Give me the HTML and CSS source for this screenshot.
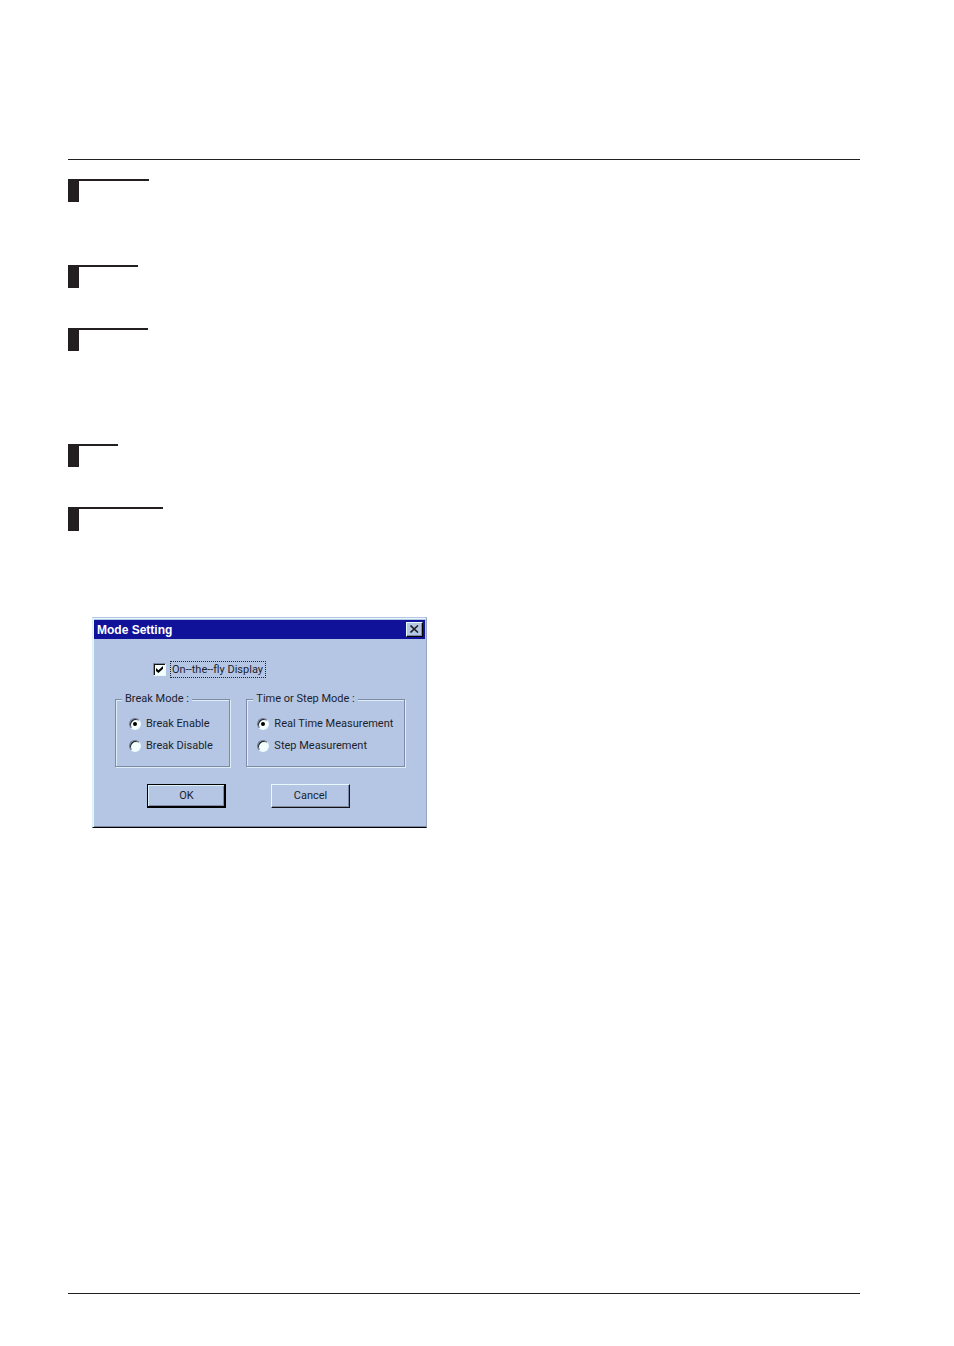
FILE: index.html
```html
<!DOCTYPE html>
<html lang="en">
<head>
  <meta charset="UTF-8">
  <title>Mode Setting</title>
  <link rel="stylesheet" href="styles.css">
</head>
<body>

  <main class="page">
    <hr class="rule">

    <div class="sections">
      <div class="section"><div class="marker w-81"></div></div>
      <div class="section short"><div class="marker w-70"></div></div>
      <div class="section tall"><div class="marker w-80"></div></div>
      <div class="section short"><div class="marker w-50"></div></div>
      <div class="section last"><div class="marker w-95"></div></div>
    </div>

    <form class="dialog">
      <div class="title-bar">
        <span class="title">Mode Setting</span>
        <button type="button" class="close" aria-label="Close">
          <svg width="9" height="8" viewBox="0 0 9 8"><path d="M0.5 0.5L8 7.5M8 0.5L0.5 7.5" stroke="#222" stroke-width="1.6"/></svg>
        </button>
      </div>

      <div class="content">
        <div class="display-row">
          <input type="checkbox" id="display" checked>
          <label for="display" class="focused">On--the--fly Display</label>
        </div>

        <div class="groups">
          <fieldset>
            <legend>Break Mode :</legend>
            <div class="option"><input type="radio" name="break" id="enable" checked><label for="enable">Break Enable</label></div>
            <div class="option"><input type="radio" name="break" id="disable"><label for="disable">Break Disable</label></div>
          </fieldset>
          <fieldset class="measure">
            <legend>Time or Step Mode :</legend>
            <div class="option"><input type="radio" name="measure" id="time" checked><label for="time">Real Time Measurement</label></div>
            <div class="option"><input type="radio" name="measure" id="step"><label for="step">Step Measurement</label></div>
          </fieldset>
        </div>

        <div class="buttons">
          <button type="button" class="btn default">OK</button>
          <button type="button" class="btn">Cancel</button>
        </div>
      </div>
    </form>

    <hr class="rule bottom">
  </main>

</body>
</html>
```
FILE: styles.css
```css
* { box-sizing: border-box; }
body { margin: 0; background: #fff; font-family: Roboto, "Liberation Sans", sans-serif; font-size: 11px; line-height: 16px; color: #1b1f2c; }
.page { display: flex; flex-direction: column; min-height: 100vh; padding: 159px 94px 52px 68px; }
.rule { width: 100%; height: 1px; margin: 0; border: 0; background: #231f20; }
.rule.bottom { margin-top: auto; }

/* section markers */
.sections { padding-top: 19px; }
.section { height: 86px; }
.section.short { height: 63px; }
.section.tall { height: 116px; }
.section.last { height: 110px; }
.marker { height: 23px; border-top: 2px solid #231f20; background: linear-gradient(#231f20, #231f20) left / 11px 100% no-repeat; }
.section.last .marker { height: 24px; }
.w-81 { width: 81px; }
.w-70 { width: 70px; }
.w-80 { width: 80px; }
.w-50 { width: 50px; }
.w-95 { width: 95px; }

/* dialog */
.dialog { width: 100%; max-width: 335px; margin-left: 24px; padding: 2px 1px 1px; background: #b5c5e4; border: 1px solid; border-color: #b5c5e4 #98a5c0 #000 #d8f0f8; box-shadow: inset 1px 1px #e6fafc, inset 0 -1px #7f8ba6; }
.title-bar { display: flex; align-items: center; justify-content: space-between; height: 19px; padding: 0 2px 0 3px; background: #10129a; }
.title { font-family: "Liberation Sans", sans-serif; font-size: 12px; font-weight: bold; color: #fff; }
.close { display: flex; align-items: center; justify-content: center; width: 17px; height: 15px; padding: 0 1px 1px 0; background: #b5c5e4; border: 1px solid; border-color: #e6fafc #000 #000 #e6fafc; box-shadow: inset -1px -1px #7f8ba6; }
.content { padding: 22px 20px 18px 21px; }
.display-row { display: flex; align-items: center; gap: 4px; padding-left: 38px; }
.focused { height: 17px; padding: 0 2px 0 1px; border: 1px dotted #222; line-height: 15px; }

.groups { display: grid; grid-template-columns: 8fr 11fr; gap: 16px; margin-top: 13px; }
fieldset { min-width: 0; margin: 0; padding: 6px 0 9px 13px; border: 1px solid #7f8ba6; box-shadow: 1px 1px #dcedf4, inset 1px 1px #dcedf4; }
legend { margin-left: -7px; padding: 0 3px; background: #b5c5e4; }
.measure { padding-left: 10px; }
.measure legend { margin-left: -4px; }
.option { display: flex; align-items: center; gap: 5px; height: 22px; white-space: nowrap; }

input { appearance: none; flex: none; width: 13px; height: 13px; margin: 0; background: #f3ffff; border: 1px solid; }
input[type="checkbox"] { border-color: #7f8ba6 #e6fafc #e6fafc #7f8ba6; box-shadow: inset 1px 1px #111; }
input[type="checkbox"]:checked::before { content: ""; display: block; width: 7px; height: 7px; margin: 2px; background: #000; clip-path: polygon(0 30%, 35% 60%, 100% 0, 100% 40%, 35% 100%, 0 70%); }
input[type="radio"] { width: 12px; height: 12px; border-color: #6b7690 #e6fafc #e6fafc #6b7690; border-radius: 50%; box-shadow: inset 1px 1px #222; }
input[type="radio"]:checked::before { content: ""; display: block; width: 4px; height: 4px; margin: 3px; background: #000; border-radius: 50%; }

.buttons { display: flex; gap: 45px; margin-top: 17px; padding-left: 32px; }
.btn { width: 79px; height: 24px; padding: 0 0 1px; background: #b5c5e4; border: 1px solid; border-color: #e6fafc #111 #111 #e6fafc; box-shadow: inset -1px -1px #7f8ba6; font: inherit; color: inherit; }
.btn.default { border: 1px solid #000; box-shadow: inset -1px -1px #000, inset 1px 1px #d8f0f8, inset -2px -2px #7f8ba6; }
```
